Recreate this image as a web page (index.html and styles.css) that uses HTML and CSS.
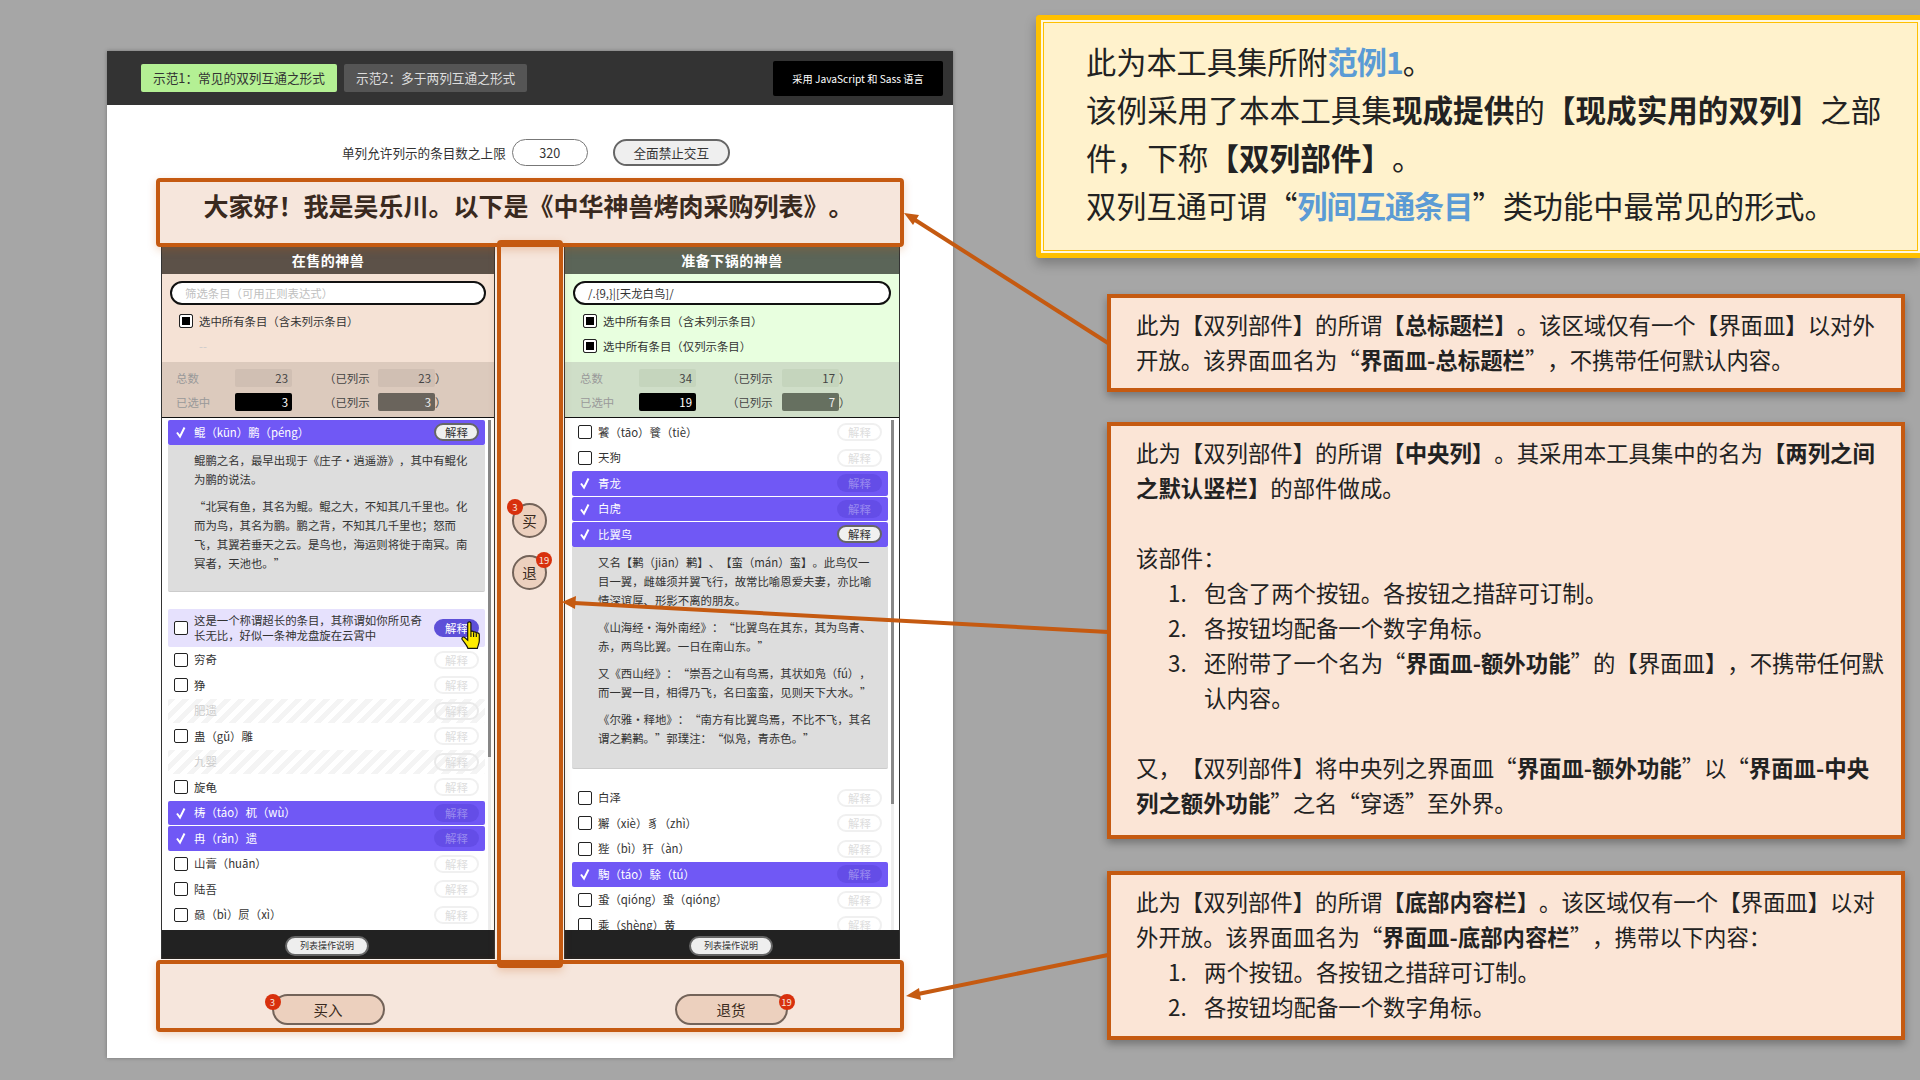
FILE: index.html
```html
<!DOCTYPE html>
<html lang="zh-CN">
<head>
    <meta charset="UTF-8">
    <title>双列互通 示范1</title>
    <link rel="stylesheet" href="styles.css">
</head>
<body>
<div class="stage">
    <div class="slide">
        <div class="topbar">
            <div class="tab tab-on">示范1：常见的双列互通之形式</div>
            <div class="tab">示范2：多于两列互通之形式</div>
            <div class="lang">采用 JavaScript 和 Sass 语言</div>
        </div>

        <div class="controls">
            <span>单列允许列示的条目数之上限</span>
            <div class="limit">320</div>
            <div class="lock">全面禁止交互</div>
        </div>

        <div class="widget">
            <div class="title">大家好！我是吴乐川。以下是《中华神兽烤肉采购列表》。</div>

            <div class="columns">
                <div class="col col-left">
                    <div class="col-head">在售的神兽</div>
                    <div class="filter">
                        <div class="search placeholder">筛选条目（可用正则表达式）</div>
                        <div class="check-all"><i class="box box-some"></i>选中所有条目（含未列示条目）</div>
                        <div class="check-all dash">--</div>
                    </div>
                    <div class="stats">
                        <span class="stat-label">总数</span><b class="num">23</b>
                        <span class="stat-open">（已列示</span><b class="num">23</b><span>）</span>
                        <span class="stat-label">已选中</span><b class="num num-black">3</b>
                        <span class="stat-open">（已列示</span><b class="num num-grey">3</b><span>）</span>
                    </div>
                    <div class="list">
                        <div class="rows">
                            <div class="row row-sel"><svg class="tick" viewBox="0 0 14 14"><path d="M3 7.5 6 11.5 10.5 2.5"/></svg><span class="name">鲲（kūn）鹏（péng）</span><span class="why why-on">解释</span></div>
                            <div class="details">
                                <p>鲲鹏之名，最早出现于《庄子·逍遥游》，其中有鲲化为鹏的说法。</p>
                                <p>“北冥有鱼，其名为鲲。鲲之大，不知其几千里也。化而为鸟，其名为鹏。鹏之背，不知其几千里也；怒而飞，其翼若垂天之云。是鸟也，海运则将徙于南冥。南冥者，天池也。”</p>
                            </div>
                            <div class="row row-hover"><i class="box"></i><span class="name">这是一个称谓超长的条目，其称谓如你所见奇长无比，好似一条神龙盘旋在云霄中</span><span class="why why-hover">解释</span>
                                <svg class="hand" viewBox="0 0 20 27"><path d="M6 2.2C6 .4 9 .4 9 2.2V10.5C9 9 11.5 9 11.5 10.8 11.5 9.7 14 9.7 14 11.5 14 10.6 16.8 10.8 16.8 12.8V18.5C16.8 21 15.4 23 15 25.5H6.2C5.4 22.6 2.6 20 .9 17.2 0 15.6 1.6 14.2 3.2 15.4L6 17.8Z"/><path d="M9 10.5V15M11.5 10.8V15M14 11.5V15"/></svg>
                            </div>
                            <div class="row"><i class="box"></i><span class="name">穷奇</span><span class="why">解释</span></div>
                            <div class="row"><i class="box"></i><span class="name">狰</span><span class="why">解释</span></div>
                            <div class="row row-off"><i class="box-none"></i><span class="name">肥遗</span><span class="why">解释</span></div>
                            <div class="row"><i class="box"></i><span class="name">蛊（gǔ）雕</span><span class="why">解释</span></div>
                            <div class="row row-off"><i class="box-none"></i><span class="name">九婴</span><span class="why">解释</span></div>
                            <div class="row"><i class="box"></i><span class="name">旋龟</span><span class="why">解释</span></div>
                            <div class="row row-sel"><svg class="tick" viewBox="0 0 14 14"><path d="M3 7.5 6 11.5 10.5 2.5"/></svg><span class="name">梼（táo）杌（wù）</span><span class="why why-dim">解释</span></div>
                            <div class="row row-sel"><svg class="tick" viewBox="0 0 14 14"><path d="M3 7.5 6 11.5 10.5 2.5"/></svg><span class="name">冉（rǎn）遗</span><span class="why why-dim">解释</span></div>
                            <div class="row"><i class="box"></i><span class="name">山膏（huān）</span><span class="why">解释</span></div>
                            <div class="row"><i class="box"></i><span class="name">陆吾</span><span class="why">解释</span></div>
                            <div class="row"><i class="box"></i><span class="name">赑（bì）屃（xì）</span><span class="why">解释</span></div>
                        </div>
                        <div class="scrollbar"><div class="thumb thumb-left"></div></div>
                    </div>
                    <div class="col-foot"><div class="help">列表操作说明</div></div>
                </div>

                <div class="middle">
                    <div class="round">买<span class="badge badge-left">3</span></div>
                    <div class="round">退<span class="badge badge-right">19</span></div>
                </div>

                <div class="col col-right">
                    <div class="col-head">准备下锅的神兽</div>
                    <div class="filter">
                        <div class="search">/.{9,}|[天龙白鸟]/</div>
                        <div class="check-all"><i class="box box-some"></i>选中所有条目（含未列示条目）</div>
                        <div class="check-all"><i class="box box-some"></i>选中所有条目（仅列示条目）</div>
                    </div>
                    <div class="stats">
                        <span class="stat-label">总数</span><b class="num">34</b>
                        <span class="stat-open">（已列示</span><b class="num">17</b><span>）</span>
                        <span class="stat-label">已选中</span><b class="num num-black">19</b>
                        <span class="stat-open">（已列示</span><b class="num num-grey">7</b><span>）</span>
                    </div>
                    <div class="list">
                        <div class="rows">
                            <div class="row"><i class="box"></i><span class="name">饕（tāo）餮（tiè）</span><span class="why">解释</span></div>
                            <div class="row"><i class="box"></i><span class="name">天狗</span><span class="why">解释</span></div>
                            <div class="row row-sel"><svg class="tick" viewBox="0 0 14 14"><path d="M3 7.5 6 11.5 10.5 2.5"/></svg><span class="name">青龙</span><span class="why why-dim">解释</span></div>
                            <div class="row row-sel"><svg class="tick" viewBox="0 0 14 14"><path d="M3 7.5 6 11.5 10.5 2.5"/></svg><span class="name">白虎</span><span class="why why-dim">解释</span></div>
                            <div class="row row-sel"><svg class="tick" viewBox="0 0 14 14"><path d="M3 7.5 6 11.5 10.5 2.5"/></svg><span class="name">比翼鸟</span><span class="why why-on">解释</span></div>
                            <div class="details">
                                <p>又名【鹣（jiān）鹣】、【蛮（mán）蛮】。此鸟仅一目一翼，雌雄须并翼飞行，故常比喻恩爱夫妻，亦比喻情深谊厚、形影不离的朋友。</p>
                                <p>《山海经·海外南经》：“比翼鸟在其东，其为鸟青、赤，两鸟比翼。一日在南山东。”</p>
                                <p>又《西山经》：“崇吾之山有鸟焉，其状如凫（fú），而一翼一目，相得乃飞，名曰蛮蛮，见则天下大水。”</p>
                                <p>《尔雅·释地》：“南方有比翼鸟焉，不比不飞，其名谓之鹣鹣。”郭璞注：“似凫，青赤色。”</p>
                            </div>
                            <div class="row"><i class="box"></i><span class="name">白泽</span><span class="why">解释</span></div>
                            <div class="row"><i class="box"></i><span class="name">獬（xiè）豸（zhì）</span><span class="why">解释</span></div>
                            <div class="row"><i class="box"></i><span class="name">狴（bì）犴（àn）</span><span class="why">解释</span></div>
                            <div class="row row-sel"><svg class="tick" viewBox="0 0 14 14"><path d="M3 7.5 6 11.5 10.5 2.5"/></svg><span class="name">騊（táo）駼（tú）</span><span class="why why-dim">解释</span></div>
                            <div class="row"><i class="box"></i><span class="name">蛩（qióng）蛩（qióng）</span><span class="why">解释</span></div>
                            <div class="row"><i class="box"></i><span class="name">乘（shèng）黄</span><span class="why">解释</span></div>
                        </div>
                        <div class="scrollbar"><div class="thumb thumb-right"></div></div>
                    </div>
                    <div class="col-foot"><div class="help">列表操作说明</div></div>
                </div>
            </div>

            <div class="bottom">
                <div class="pill-cell"><div class="pill">买入<span class="badge badge-left">3</span></div></div>
                <div class="pill-cell"><div class="pill">退货<span class="badge badge-right">19</span></div></div>
            </div>

            <div class="mark mark-title"></div>
            <div class="mark mark-middle"></div>
            <div class="mark mark-bottom"></div>
        </div>
    </div>

    <div class="notes">
        <div class="lead">
            <p class="lead-line">此为本工具集所附<b class="blue">范例1</b>。</p>
            <p>该例采用了本本工具集<b>现成提供</b>的<b>【现成实用的双列】</b>之部件，下称<b>【双列部件】</b>。</p>
            <p class="lead-line">双列互通可谓“<b class="blue">列间互通条目</b>”类功能中最常见的形式。</p>
        </div>

        <div class="note note-head">
            <p>此为【双列部件】的所谓<b>【总标题栏】</b>。该区域仅有一个【界面皿】以对外开放。该界面皿名为“<b>界面皿-总标题栏</b>”，不携带任何默认内容。</p>
        </div>

        <div class="note note-middle">
            <p>此为【双列部件】的所谓<b>【中央列】</b>。其采用本工具集中的名为<b>【两列之间之默认竖栏】</b>的部件做成。</p>
            <p class="gap">该部件：</p>
            <ol>
                <li>包含了两个按钮。各按钮之措辞可订制。</li>
                <li>各按钮均配备一个数字角标。</li>
                <li>还附带了一个名为“<b>界面皿-额外功能</b>”的【界面皿】，不携带任何默认内容。</li>
            </ol>
            <p class="gap">又，【双列部件】将中央列之界面皿“<b>界面皿-额外功能</b>”以“<b>界面皿-中央列之额外功能</b>”之名“穿透”至外界。</p>
        </div>

        <div class="note note-bottom">
            <p>此为【双列部件】的所谓<b>【底部内容栏】</b>。该区域仅有一个【界面皿】以对外开放。该界面皿名为“<b>界面皿-底部内容栏</b>”，携带以下内容：</p>
            <ol>
                <li>两个按钮。各按钮之措辞可订制。</li>
                <li>各按钮均配备一个数字角标。</li>
            </ol>
        </div>
    </div>
</div>

<svg class="arrows" viewBox="0 0 1920 1080">
    <path d="M1108 343 912 218"/>
    <polygon points="904,213 919,215 913,225"/>
    <path d="M1108 632 574 603"/>
    <polygon points="562,602 576,596 575,609"/>
    <path d="M1108 955 918 994"/>
    <polygon points="906,996 919,988 921,1000"/>
</svg>
</body>
</html>
```

FILE: styles.css
```css
* {
    box-sizing: border-box;
}
html, body {
    margin: 0;
    height: 100%;
}
body {
    position: relative;
    width: 1920px;
    height: 1080px;
    overflow: hidden;
    background-color: #a6a6a6;
    color: #222;
    font-family: "Noto Sans CJK SC", "Liberation Sans", sans-serif;
    text-spacing-trim: space-all;
}
p {
    margin: 0;
}
b {
    font-weight: 700;
}
i {
    font-style: normal;
}

.stage {
    display: flex;
    align-items: flex-start;
}

/* left: the page being shown */
.slide {
    width: 846px;
    height: 1007px;
    margin: 51px 0 0 107px;
    background-color: #fff;
    box-shadow: 0 0 4px rgba(0, 0, 0, .3);
}
.topbar {
    display: flex;
    align-items: center;
    gap: 7px;
    height: 54px;
    padding: 0 10px 0 34px;
    background-color: #333;
}
.tab {
    height: 28px;
    padding: 0 12px;
    border-radius: 2px;
    background-color: #555;
    color: #ddd;
    font-size: 12.7px;
    line-height: 28px;
}
.tab-on {
    background-color: #b4f094;
    color: #333;
}
.lang {
    width: 170px;
    height: 35px;
    margin-left: auto;
    border-radius: 2px;
    background-color: #000;
    color: #fff;
    font-size: 10.2px;
    line-height: 35px;
    text-align: center;
}

.controls {
    display: flex;
    align-items: center;
    height: 27px;
    margin: 34px 0 12px 235px;
    color: #333;
    font-size: 12.6px;
}
.limit {
    width: 76px;
    height: 27px;
    margin-left: 6px;
    border: 1px solid #777;
    border-radius: 14px;
    line-height: 25px;
    text-align: center;
}
.lock {
    width: 117px;
    height: 27px;
    margin-left: 25px;
    border: 2px solid #666;
    border-radius: 14px;
    background-color: #efefef;
    line-height: 23px;
    text-align: center;
}

.widget {
    position: relative;
    width: 739px;
    margin-left: 54px;
}
.title {
    height: 68px;
    padding: 0 4px 13px 0;
    font-size: 25px;
    font-weight: 700;
    line-height: 55px;
    text-align: center;
    white-space: nowrap;
}
.columns {
    display: flex;
}
.col {
    display: flex;
    flex-direction: column;
    height: 713px;
    border-left: 1px solid #333;
    border-right: 1px solid #333;
}
.col-left {
    width: 334px;
    --head: #5c5148;
    --filter: #f5e2d5;
    --stats: #dccabd;
    --num: #d0bfb3;
    --num-grey: #6a645c;
    --stats-left: 14px;
    --open-left: 32px;
    --check-left: 9px;
}
.col-right {
    width: 336px;
    --head: #5b6558;
    --filter: #e8ffdf;
    --stats: #cfdec8;
    --num: #c5d5bd;
    --num-grey: #667060;
    --stats-left: 15px;
    --open-left: 31px;
    --check-left: 10px;
}
.col-head {
    height: 28px;
    background-color: var(--head);
    color: #fff;
    font-size: 14px;
    font-weight: 700;
    letter-spacing: .5px;
    line-height: 28px;
    text-align: center;
}
.filter {
    height: 88px;
    padding: 7px 8px 0;
    background-color: var(--filter);
    font-size: 11.4px;
}
.search {
    height: 24px;
    padding-left: 13px;
    border: 2px solid #111;
    border-radius: 12px;
    background-color: #fff;
    color: #333;
    line-height: 20px;
}
.placeholder {
    color: #c0c0c0;
}
.check-all {
    display: flex;
    align-items: center;
    gap: 6px;
    height: 25px;
    padding-left: var(--check-left);
    color: #333;
    line-height: 16px;
}
.search + .check-all {
    margin-top: 3px;
}
.dash {
    padding-left: 29px;
    color: #ccc;
}
.box {
    flex: none;
    width: 14px;
    height: 14px;
    border: 1.5px solid #222;
    border-radius: 2px;
    background-color: #fff;
}
.box-some {
    box-shadow: inset 0 0 0 2px #fff, inset 0 0 0 8px #000;
}
.box-none {
    flex: none;
    width: 14px;
}

.stats {
    display: grid;
    grid-template-columns: 59px 57px 86px 57px 1fr;
    grid-template-rows: 18px 18px;
    row-gap: 6px;
    align-items: center;
    height: 56px;
    padding: 7px 0 0 var(--stats-left);
    border-bottom: 1px solid #111;
    background-color: var(--stats);
    color: #444;
    font-size: 11.4px;
    line-height: 18px;
}
.stat-label {
    color: #999;
}
.stat-open {
    margin-left: var(--open-left);
    white-space: nowrap;
}
.num {
    height: 18px;
    padding-right: 4px;
    border-radius: 2px;
    background-color: var(--num);
    font-weight: 400;
    text-align: right;
}
.num-black {
    background-color: #000;
    color: #fff;
}
.num-grey {
    background-color: var(--num-grey);
    color: #eee;
}

.list {
    display: flex;
    flex: 1;
    min-height: 0;
    overflow: hidden;
    padding: 2px 3px 0 6px;
    background-color: #fff;
}
.col-right .list {
    padding-left: 7px;
}
.rows {
    width: 317px;
    min-width: 317px;
}
.col-right .rows {
    width: 316px;
    min-width: 316px;
}
.row {
    position: relative;
    display: flex;
    align-items: center;
    gap: 6px;
    height: 24.5px;
    margin-bottom: 1px;
    padding: 0 6px;
    border-radius: 2px;
    color: #333;
    font-size: 11.4px;
    line-height: 15px;
}
.name {
    flex: 1;
}
.row-sel {
    background-color: #7058f5;
    color: #fff;
}
.row-hover {
    height: 38px;
    background-color: #e6e1fd;
}
.row-off {
    background-image: repeating-linear-gradient(135deg, #f4f4f4 0 5px, #fff 5px 10px);
    color: #ccc;
}
.tick {
    flex: none;
    width: 14px;
    height: 14px;
}
.tick path {
    fill: none;
    stroke: #fff;
    stroke-width: 2;
}
.why {
    flex: none;
    width: 45px;
    height: 18px;
    border: 2px solid #f0f0f0;
    border-radius: 9px;
    color: #ddd;
    font-size: 11.4px;
    line-height: 14px;
    text-align: center;
}
.row-off .why {
    border-color: #eaeaea;
}
.why-on {
    border-color: #666;
    background-color: #f0f0f0;
    color: #333;
}
.why-dim {
    border-color: transparent;
    background-color: rgba(60, 40, 180, .22);
    color: rgba(255, 255, 255, .35);
}
.why-hover {
    border-color: #5d4fd8;
    background-color: #5d4fd8;
    color: #fff;
}
.hand {
    position: absolute;
    top: 12px;
    right: 2px;
    width: 22px;
    height: 29px;
}
.hand path {
    fill: #ffec00;
    stroke: #111;
    stroke-width: 1.1;
}
.details {
    margin-top: -1px;
    padding: 6px 17px 18px 26px;
    margin-bottom: 17px;
    border-bottom: 1px solid #ccc;
    border-radius: 0 0 2px 2px;
    background-color: #ddd;
    color: #333;
    font-size: 11.4px;
    line-height: 19px;
}
.col-right .details {
    padding: 6px 16px 20px 26px;
}
.details p + p {
    margin-top: 8px;
}
.scrollbar {
    width: 3px;
    margin-left: 3px;
    background-color: #eee;
}
.thumb {
    background-color: #888;
}
.thumb-left {
    height: 337px;
}
.thumb-right {
    height: 384px;
}
.col-foot {
    flex: none;
    display: flex;
    justify-content: center;
    align-items: flex-start;
    height: 29px;
    padding: 6px 2px 0 0;
    background-color: #222;
}
.help {
    width: 84px;
    height: 20px;
    border: 2px solid #666;
    border-radius: 10px;
    background-color: #eee;
    color: #333;
    font-size: 9px;
    line-height: 16px;
    text-align: center;
}

.middle {
    flex: none;
    display: flex;
    flex-direction: column;
    align-items: center;
    gap: 17px;
    width: 69px;
    padding-top: 257px;
}
.round {
    position: relative;
    width: 35px;
    height: 35px;
    border: 2px solid #666;
    border-radius: 50%;
    background-color: #f4e6dc;
    font-size: 14.5px;
    line-height: 31px;
    text-align: center;
}
.badge {
    position: absolute;
    width: 16px;
    height: 16px;
    border-radius: 50%;
    background-color: #dc2a0c;
    color: #fff;
    font-size: 9.5px;
    line-height: 16px;
    text-align: center;
}
.round .badge-left {
    top: -6px;
    left: -7px;
}
.round .badge-right {
    top: -5px;
    right: -7px;
}
.bottom {
    display: flex;
    gap: 69px;
    height: 71px;
    padding-top: 35px;
}
.pill-cell {
    display: flex;
    justify-content: center;
    width: 334px;
}
.pill {
    position: relative;
    width: 113px;
    height: 31px;
    border: 2px solid #666;
    border-radius: 16px;
    background-color: #f4e6dc;
    font-size: 14.5px;
    line-height: 27px;
    text-align: center;
}
.pill .badge-left {
    top: -2px;
    left: -9px;
}
.pill .badge-right {
    top: -2px;
    right: -9px;
}

/* the orange frames drawn on top of the widget */
.mark {
    position: absolute;
    border: 4px solid #c55a11;
    border-radius: 4px;
    background-color: rgba(197, 90, 17, .15);
    box-shadow: 0 3px 8px rgba(197, 90, 17, .25);
}
.mark-title {
    top: 0;
    left: -5px;
    width: 748px;
    height: 69px;
}
.mark-middle {
    top: 62px;
    left: 336px;
    width: 66px;
    height: 728px;
}
.mark-bottom {
    top: 782px;
    left: -5px;
    width: 748px;
    height: 72px;
}

/* right: the explanations */
.notes {
    display: flex;
    flex: 1;
    flex-direction: column;
    align-items: flex-start;
    padding: 15px 0 0 83px;
}
.lead {
    width: 884px;
    height: 243px;
    padding: 17px 0 0 45px;
    border: 5px solid #ffc000;
    border-right: 0;
    border-radius: 4px 0 0 4px;
    background-color: #fff2cc;
    box-shadow: inset 0 0 0 2px #fff8e0, inset 0 0 0 3px #ffc000, 0 6px 12px rgba(0, 0, 0, .25);
    font-size: 30.6px;
    line-height: 48px;
}
.lead p {
    width: 810px;
}
.lead .lead-line {
    font-size: 30.2px;
}
.blue {
    color: #5b9bd5;
    letter-spacing: -1px;
}
.note {
    width: 798px;
    padding: 9px 12px 11px 25px;
    border: 4px solid #c55a11;
    background-color: #fbe5d6;
    box-shadow: 0 4px 8px rgba(0, 0, 0, .3);
    font-size: 22.4px;
    line-height: 35px;
}
.note-head {
    margin: 36px 0 0 71px;
}
.note-middle {
    margin: 30px 0 0 71px;
    padding-bottom: 15px;
}
.note-bottom {
    margin: 32px 0 0 71px;
    padding-bottom: 12px;
}
.note ol {
    margin: 0;
    padding-left: 32px;
    list-style: none;
    counter-reset: step;
}
.note li {
    padding-left: 36px;
    text-indent: -36px;
    counter-increment: step;
}
.note li::before {
    content: counter(step) ".";
    display: inline-block;
    width: 36px;
    text-indent: 0;
}
.gap {
    margin-top: 35px;
}

.arrows {
    position: absolute;
    top: 0;
    left: 0;
    width: 1920px;
    height: 1080px;
    pointer-events: none;
}
.arrows path {
    fill: none;
    stroke: #c55a11;
    stroke-width: 4;
}
.arrows polygon {
    fill: #c55a11;
}
```
